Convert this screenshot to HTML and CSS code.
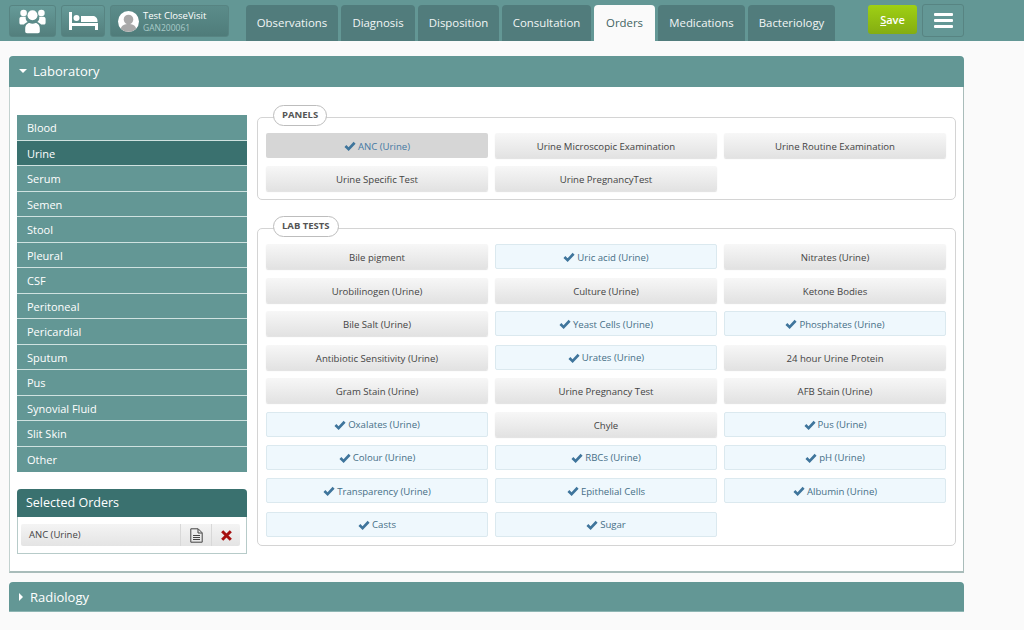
FILE: index.html
```html
<!DOCTYPE html>
<html lang="en">
<head>
<meta charset="utf-8">
<title>Orders</title>
<link rel="stylesheet" href="styles.css">
</head>
<body>
<svg class="defs" width="0" height="0" aria-hidden="true">
  <symbol id="check" viewBox="0 0 12 10"><path d="M1.400 5 4.600 8.100 10.600 1.800" fill="none" stroke="currentColor" stroke-width="2.700"/></symbol>
</svg>
<header class="topbar">
  <div class="tools">
    <button class="tool tool-users" aria-label="Patients">
      <svg width="27" height="27" viewBox="0 0 27 27" fill="#fff"><circle cx="13.500" cy="7.200" r="5"/><circle cx="4.600" cy="5" r="3.300"/><circle cx="22.400" cy="5" r="3.300"/><path d="M.4 11c0-1.500 1-2.300 2.300-2.300h4.100c-.5 2 .4 4 1.900 5.200-1.700.6-3 1.500-3.700 2.700H2.500C1.200 16.600.4 15.900.4 14.700zM26.600 11c0-1.500-1-2.300-2.300-2.300h-4.100c.5 2-.4 4-1.900 5.200 1.700.6 3 1.500 3.700 2.700h2.500c1.300 0 2.100-.7 2.100-1.900z"/><path d="M6.200 20.500c0-3.200 2.200-5.500 4.300-5.500 1.800 1.100 4.200 1.100 6 0 2.100 0 4.300 2.300 4.300 5.500v3c0 1-.8 1.700-1.800 1.700H8c-1 0-1.800-.7-1.800-1.700z"/></svg>
    </button>
    <button class="tool tool-bed" aria-label="Bed">
      <svg width="29" height="20" viewBox="0 0 29 20" fill="#fff"><rect x="0" y="1" width="3" height="18"/><circle cx="7.500" cy="7" r="3"/><path d="M12 5h11.500c3 0 5 2 5 5v1H12z"/><rect x="0" y="12" width="29" height="3"/><rect x="26" y="12" width="3" height="7"/></svg>
    </button>
    <div class="tool patient">
      <svg class="avatar" width="21" height="21" viewBox="0 0 21 21"><circle cx="10.500" cy="10.500" r="10.500" fill="#fff"/><circle cx="10.500" cy="8.500" r="4.800" fill="#a9a9a9"/><path d="M2.800 17.500c1.200-3.500 4-4.500 7.700-4.500s6.500 1 7.700 4.500a10.500 10.500 0 0 1-15.400 0z" fill="#a9a9a9"/></svg>
      <div class="patient-text">
        <div class="patient-name">Test CloseVisit</div>
        <div class="patient-id">GAN200061</div>
      </div>
    </div>
  </div>
  <nav class="tabs">
    <a class="tab t-obs">Observations</a>
    <a class="tab t-dia">Diagnosis</a>
    <a class="tab t-dis">Disposition</a>
    <a class="tab t-con">Consultation</a>
    <a class="tab tab-active">Orders</a>
    <a class="tab t-med">Medications</a>
    <a class="tab t-bac">Bacteriology</a>
  </nav>
  <button class="save"><span class="underline">S</span>ave</button>
  <button class="menu" aria-label="Menu"><span></span><span></span><span></span></button>
</header>

<main class="content">
  <section class="accordion">
    <div class="acc-head"><i class="caret-down"></i>Laboratory</div>
    <div class="acc-body">
      <aside class="side">
        <ul class="specimens">
          <li>Blood</li>
          <li class="current">Urine</li>
          <li>Serum</li>
          <li>Semen</li>
          <li>Stool</li>
          <li>Pleural</li>
          <li>CSF</li>
          <li>Peritoneal</li>
          <li>Pericardial</li>
          <li>Sputum</li>
          <li>Pus</li>
          <li>Synovial Fluid</li>
          <li>Slit Skin</li>
          <li>Other</li>
        </ul>
        <div class="selected">
          <div class="selected-head">Selected Orders</div>
          <div class="selected-body">
            <div class="order">
              <span class="order-name">ANC (Urine)</span>
              <span class="order-act">
                <svg width="13" height="15" viewBox="0 0 13 15" fill="none" stroke="#444" stroke-width="1"><path d="M.8.8h7.400l4 4v9.400H.8zM8 1v4h4"/><path d="M3 7.500h7M3 9.500h7M3 11.500h7"/></svg>
              </span>
              <span class="order-act">
                <svg width="11" height="11" viewBox="0 0 11 11" stroke="#a61010" stroke-width="3"><path d="M1.200 1.200l8.600 8.600M9.800 1.200l-8.600 8.600"/></svg>
              </span>
            </div>
          </div>
        </div>
      </aside>
      <div class="groups">
        <section class="group panels">
          <div class="legend">PANELS</div>
          <div class="grid">
            <button class="btn on-grey"><svg class="tick"><use href="#check"/></svg>ANC (Urine)</button>
            <button class="btn">Urine Microscopic Examination</button>
            <button class="btn">Urine Routine Examination</button>
            <button class="btn">Urine Specific Test</button>
            <button class="btn">Urine PregnancyTest</button>
          </div>
        </section>
        <section class="group tests">
          <div class="legend">LAB TESTS</div>
          <div class="grid">
            <button class="btn">Bile pigment</button>
            <button class="btn on"><svg class="tick"><use href="#check"/></svg>Uric acid (Urine)</button>
            <button class="btn">Nitrates (Urine)</button>
            <button class="btn">Urobilinogen (Urine)</button>
            <button class="btn">Culture (Urine)</button>
            <button class="btn">Ketone Bodies</button>
            <button class="btn">Bile Salt (Urine)</button>
            <button class="btn on"><svg class="tick"><use href="#check"/></svg>Yeast Cells (Urine)</button>
            <button class="btn on"><svg class="tick"><use href="#check"/></svg>Phosphates (Urine)</button>
            <button class="btn">Antibiotic Sensitivity (Urine)</button>
            <button class="btn on"><svg class="tick"><use href="#check"/></svg>Urates (Urine)</button>
            <button class="btn">24 hour Urine Protein</button>
            <button class="btn">Gram Stain (Urine)</button>
            <button class="btn">Urine Pregnancy Test</button>
            <button class="btn">AFB Stain (Urine)</button>
            <button class="btn on"><svg class="tick"><use href="#check"/></svg>Oxalates (Urine)</button>
            <button class="btn">Chyle</button>
            <button class="btn on"><svg class="tick"><use href="#check"/></svg>Pus (Urine)</button>
            <button class="btn on"><svg class="tick"><use href="#check"/></svg>Colour (Urine)</button>
            <button class="btn on"><svg class="tick"><use href="#check"/></svg>RBCs (Urine)</button>
            <button class="btn on"><svg class="tick"><use href="#check"/></svg>pH (Urine)</button>
            <button class="btn on"><svg class="tick"><use href="#check"/></svg>Transparency (Urine)</button>
            <button class="btn on"><svg class="tick"><use href="#check"/></svg>Epithelial Cells</button>
            <button class="btn on"><svg class="tick"><use href="#check"/></svg>Albumin (Urine)</button>
            <button class="btn on"><svg class="tick"><use href="#check"/></svg>Casts</button>
            <button class="btn on"><svg class="tick"><use href="#check"/></svg>Sugar</button>
          </div>
        </section>
      </div>
    </div>
  </section>
  <section class="accordion closed">
    <div class="acc-head"><i class="caret-right"></i>Radiology</div>
  </section>
</main>
</body>
</html>
```

FILE: styles.css
```css
* { box-sizing: border-box; }
html, body { margin: 0; height: 100%; }
body {
  width: 1024px;
  height: 630px;
  overflow: hidden;
  background: #fafafa;
  font-family: "Open Sans", "Liberation Sans", sans-serif;
  color: #444;
}
button { font: inherit; padding: 0; cursor: pointer; }
.defs { display: block; height: 0; }

.topbar {
  display: flex;
  align-items: flex-start;
  height: 41px;
  padding: 5px 0 0 9px;
  background: #639795;
}
.tools { display: flex; gap: 5px; }
.tool {
  display: flex;
  align-items: center;
  justify-content: center;
  height: 32px;
  border: 1px solid #578482;
  border-radius: 3px;
  background: linear-gradient(#659a98, #537f7d);
}
.tool-users { width: 47px; }
.tool-bed { width: 44px; }
.patient {
  width: 119px;
  justify-content: flex-start;
  gap: 4px;
  padding-left: 7px;
  background: linear-gradient(#5b8c8a, #4f7c7a);
}
.patient-name { font-size: 9.500px; line-height: 12px; color: #fff; }
.patient-id { font-size: 8.500px; line-height: 11px; color: #a9cbc9; }

.tabs { display: flex; gap: 3px; margin-left: 17px; height: 36px; }
.tab {
  display: flex;
  align-items: center;
  justify-content: center;
  height: 36px;
  padding-bottom: 2px;
  border-radius: 4px 4px 0 0;
  background: #517c7c;
  color: #f2f6f6;
  font-size: 11.400px;
}
.t-obs { width: 92px; }
.t-dia { width: 74px; }
.t-dis { width: 81px; }
.t-con { width: 89px; }
.t-med { width: 87px; }
.t-bac { width: 87px; }
.tab-active {
  width: 61px;
  background: #fafafa;
  color: #3f6462;
}
.save {
  width: 49px;
  height: 29px;
  margin-left: 33px;
  border: 0;
  border-radius: 3px;
  background: linear-gradient(#9fd014, #84ad12);
  color: #fff;
  font-size: 11px;
  font-weight: 600;
}
.underline { text-decoration: underline; }
.menu {
  display: flex;
  flex-direction: column;
  justify-content: center;
  align-items: center;
  gap: 3px;
  width: 42px;
  height: 33px;
  margin: -1px 0 0 5px;
  border: 1px solid #578482;
  border-radius: 3px;
  background: #639795;
}
.menu span { display: block; width: 19px; height: 3px; border-radius: 1px; background: #fff; }

.content { padding: 15px 60px 0 9px; }
.accordion { background: #fff; }
.accordion + .accordion { margin-top: 9px; }
.acc-head {
  display: flex;
  align-items: center;
  height: 31px;
  padding-bottom: 2px;
  padding-left: 10px;
  border-radius: 4px 4px 0 0;
  background: #639795;
  color: #fff;
  font-size: 13px;
}
.closed .acc-head { height: 30px; padding-bottom: 0; border-bottom: 1px solid #8db5b3; }
.caret-down {
  width: 0;
  height: 0;
  margin-right: 6px;
  border: 4px solid transparent;
  border-top-color: #fff;
  border-bottom-width: 0;
}
.caret-right {
  width: 0;
  height: 0;
  margin-right: 7px;
  border: 4px solid transparent;
  border-left-color: #fff;
  border-right-width: 0;
}
.acc-body {
  display: flex;
  gap: 10px;
  height: 486px;
  padding: 28px 7px 0 7px;
  border-left: 1px solid #c3d2d0;
  border-right: 1px solid #a9bcba;
  border-bottom: 2px solid #a9bcba;
}
.side { width: 230px; flex: none; }
.specimens { margin: 0; padding: 0; list-style: none; }
.specimens li {
  height: 25.500px;
  padding-left: 10px;
  border-bottom: 1px solid #cfe2e0;
  background: #639795;
  color: #fff;
  font-size: 11px;
  line-height: 25px;
}
.specimens li:last-child { border-bottom: 0; }
.specimens li.current { background: #3a716f; }
.selected {
  margin-top: 17px;
  border: 1px solid #b7cbc9;
  border-top: 0;
  border-radius: 4px 4px 0 0;
}
.selected-head {
  height: 28px;
  margin: 0 -1px;
  padding-left: 9px;
  border-radius: 4px 4px 0 0;
  background: #3a716f;
  color: #fff;
  font-size: 12.500px;
  line-height: 27px;
}
.selected-body { padding: 7px 6px 7px 3px; }
.order {
  display: flex;
  align-items: center;
  height: 22px;
  border-radius: 2px;
  background: linear-gradient(#f4f4f4, #e4e4e4);
  font-size: 9.500px;
}
.order-name { flex: 1; padding: 0 0 1px 8px; }
.order-act {
  display: flex;
  align-items: center;
  justify-content: center;
  height: 22px;
  width: 31px;
  border-left: 1px solid #d8d8d8;
}
.order-act:last-child { width: 29px; }

.groups { width: 699px; flex: none; }
.group {
  position: relative;
  margin-top: 2px;
  padding: 15px 9px 8px 8px;
  border: 1px solid #d4d4d4;
  border-radius: 5px;
  background: #fff;
}
.tests { margin-top: 28px; }
.legend {
  position: absolute;
  top: -13px;
  left: 15px;
  height: 21px;
  padding: 0 8px;
  border: 1px solid #bdbdbd;
  border-radius: 11px;
  background: #fff;
  color: #555;
  font-size: 9.500px;
  font-weight: 700;
  line-height: 18px;
}
.grid {
  display: grid;
  grid-template-columns: repeat(3, 222px);
  grid-auto-rows: 25px;
  gap: 8.430px 7px;
}
.btn {
  display: flex;
  align-items: center;
  justify-content: center;
  padding-top: 2px;
  border: 0;
  border-radius: 2px;
  background: linear-gradient(#f7f7f7, #e2e2e2);
  box-shadow: 0 1px 1px rgba(0, 0, 0, .12);
  color: #444;
  font-size: 9.600px;
}
.btn.on {
  padding-top: 1px;
  border: 1px solid #dbe9ef;
  background: #eff8fd;
  box-shadow: none;
  color: #466f87;
}
.btn.on-grey {
  padding-top: 1px;
  background: #d6d6d6;
  box-shadow: none;
  color: #4579a3;
}
.tick { width: 12px; height: 10px; margin-right: 2px; color: #3f759c; }
```
